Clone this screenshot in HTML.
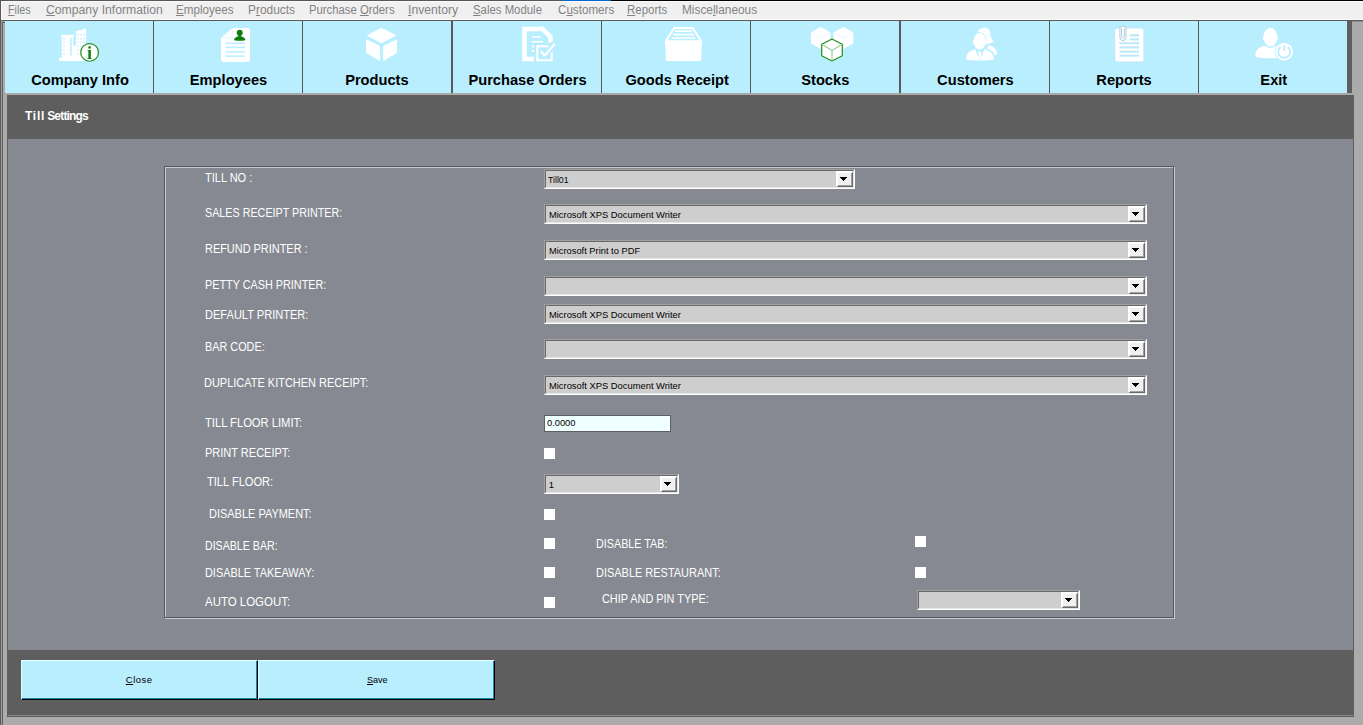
<!DOCTYPE html>
<html lang="en"><head><meta charset="utf-8"><title>Till Settings</title>
<style>
html,body{margin:0;padding:0;}
body{width:1363px;height:725px;overflow:hidden;position:relative;background:#ababab;font-family:"Liberation Sans",sans-serif;}
div,span{box-sizing:border-box;}
.a{position:absolute;}
.t{position:absolute;white-space:pre;line-height:1;}
.menu .t{font-size:12.5px;color:#838383;}
.menu u{text-decoration:underline;text-decoration-thickness:1px;text-underline-offset:1px;}
.tb{position:absolute;top:21px;height:72px;background:#b9eeff;}
.tl{font-size:14.667px;font-weight:bold;color:#000;}
.fl{font-size:12px;color:#fff;}
.ct{font-size:10px;color:#000;}
.combo{position:absolute;height:20px;background:#cecece;border-top:1px solid #a0a0a0;border-left:1px solid #a0a0a0;border-right:1px solid #fff;border-bottom:1px solid #fff;}
.combo:before{content:"";position:absolute;left:0;top:0;right:0;bottom:0;border-top:1px solid #696969;border-left:1px solid #696969;border-right:1px solid #e6e6e6;border-bottom:1px solid #e6e6e6;}
.cbtn{position:absolute;right:1px;top:1px;width:17px;height:16px;background:#f0f0f0;border-top:2px solid #fff;border-left:2px solid #fff;border-right:1px solid #696969;border-bottom:1px solid #696969;}
.cbtn:before{content:"";position:absolute;left:0;top:0;right:0;bottom:0;border-right:1px solid #a0a0a0;border-bottom:1px solid #a0a0a0;}
.cbtn svg{position:absolute;left:2px;top:4px;}
.chk{position:absolute;width:11px;height:11px;background:#fff;}
.btn{position:absolute;top:660px;height:40px;background:#b9eeff;border-top:1px solid #e4fdff;border-left:1px solid #e4fdff;border-right:1px solid #000;border-bottom:1px solid #000;}
.btn:before{content:"";position:absolute;left:0;top:0;right:0;bottom:0;border-right:1px solid #1f86ad;border-bottom:1px solid #1f86ad;}
.bt{font-size:10px;color:#000;}
.bt u{text-decoration:underline;text-decoration-thickness:1px;text-underline-offset:1px;}
</style></head>
<body>
<div class="a" style="left:0px;top:0px;width:563px;height:1px;background:#575757;"></div>
<div class="a" style="left:563px;top:0px;width:48px;height:1px;background:#0069d3;"></div>
<div class="a" style="left:611px;top:0px;width:752px;height:1px;background:#000;"></div>
<div class="menu">
<div class="a" style="left:0px;top:1px;width:1363px;height:19px;background:#f0f0f0;"></div>
<div class="a" style="left:0px;top:1px;width:1363px;height:1px;background:#fbfbfb;"></div>
<div class="a" style="left:1px;top:1px;width:1px;height:19px;background:#fbfbfb;"></div>
<div class="a" style="left:0px;top:19px;width:1363px;height:1px;background:#fbfbfb;"></div>
<div class="a" style="left:0px;top:1px;width:1px;height:19px;background:#585858;"></div>
<div class="a" style="left:0px;top:20px;width:1363px;height:1px;background:#5a5a5a;"></div>
<span id="m0" class="t " style="left:7.94px;top:4.25px;letter-spacing:0.000px;font-size:12.5px;transform:scaleX(0.8552);transform-origin:0 0;"><u>F</u>iles</span>
<span id="m1" class="t " style="left:45.50px;top:4.25px;letter-spacing:0.000px;font-size:12.5px;transform:scaleX(0.9770);transform-origin:0 0;"><u>C</u>ompany Information</span>
<span id="m2" class="t " style="left:176.27px;top:4.25px;letter-spacing:0.000px;font-size:12.5px;transform:scaleX(0.9309);transform-origin:0 0;"><u>E</u>mployees</span>
<span id="m3" class="t " style="left:247.55px;top:4.25px;letter-spacing:0.000px;font-size:12.5px;transform:scaleX(0.9526);transform-origin:0 0;">P<u>r</u>oducts</span>
<span id="m4" class="t " style="left:308.69px;top:4.25px;letter-spacing:0.000px;font-size:12.5px;transform:scaleX(0.9053);transform-origin:0 0;">Purchase <u>O</u>rders</span>
<span id="m5" class="t " style="left:408.12px;top:4.25px;letter-spacing:0.000px;font-size:12.5px;transform:scaleX(0.9753);transform-origin:0 0;"><u>I</u>nventory</span>
<span id="m6" class="t " style="left:473.30px;top:4.25px;letter-spacing:0.000px;font-size:12.5px;transform:scaleX(0.9105);transform-origin:0 0;"><u>S</u>ales Module</span>
<span id="m7" class="t " style="left:557.60px;top:4.25px;letter-spacing:0.000px;font-size:12.5px;transform:scaleX(0.9305);transform-origin:0 0;">C<u>u</u>stomers</span>
<span id="m8" class="t " style="left:627.38px;top:4.25px;letter-spacing:0.000px;font-size:12.5px;transform:scaleX(0.9173);transform-origin:0 0;"><u>R</u>eports</span>
<span id="m9" class="t " style="left:681.65px;top:4.25px;letter-spacing:0.000px;font-size:12.5px;transform:scaleX(0.9480);transform-origin:0 0;">Misce<u>l</u>laneous</span>
</div>
<div class="a" style="left:0px;top:21px;width:1px;height:704px;background:#5c5c5c;"></div>
<div class="a" style="left:1px;top:21px;width:1px;height:704px;background:#9c9c9c;"></div>
<div class="a" style="left:2px;top:22px;width:1px;height:703px;background:#606060;"></div>
<div class="a" style="left:2px;top:22px;width:3px;height:1px;background:#606060;"></div>
<div class="a" style="left:5px;top:21px;width:1342px;height:72px;background:#b9eeff"></div>
<div class="a" style="left:1347px;top:21px;width:5px;height:72px;background:#5e5e5e;"></div>
<div class="a" style="left:1352px;top:21px;width:11px;height:1px;background:#8c8c8c;"></div>
<div class="a" style="left:153px;top:21px;width:1px;height:72px;background:#595959;"></div>
<div class="a" style="left:302px;top:21px;width:1px;height:72px;background:#595959;"></div>
<div class="a" style="left:451px;top:21px;width:2px;height:72px;background:#595959;"></div>
<div class="a" style="left:601px;top:21px;width:1px;height:72px;background:#595959;"></div>
<div class="a" style="left:750px;top:21px;width:1px;height:72px;background:#595959;"></div>
<div class="a" style="left:899px;top:21px;width:2px;height:72px;background:#595959;"></div>
<div class="a" style="left:1049px;top:21px;width:1px;height:72px;background:#595959;"></div>
<div class="a" style="left:1198px;top:21px;width:1px;height:72px;background:#595959;"></div>
<div class="a" style="left:5px;top:93px;width:1349px;height:2px;background:#aaa9a9;"></div>
<span id="tl0" class="t tl" style="left:80.05px;top:73.39px;transform:translateX(-50%);">Company Info</span>
<span id="tl1" class="t tl" style="left:228.50px;top:73.39px;transform:translateX(-50%);">Employees</span>
<span id="tl2" class="t tl" style="left:376.90px;top:73.39px;transform:translateX(-50%);">Products</span>
<span id="tl3" class="t tl" style="left:527.50px;top:73.39px;transform:translateX(-50%);">Purchase Orders</span>
<span id="tl4" class="t tl" style="left:677.20px;top:73.39px;transform:translateX(-50%);">Goods Receipt</span>
<span id="tl5" class="t tl" style="left:825.30px;top:73.39px;transform:translateX(-50%);">Stocks</span>
<span id="tl6" class="t tl" style="left:975.40px;top:73.39px;transform:translateX(-50%);">Customers</span>
<span id="tl7" class="t tl" style="left:1124.00px;top:73.39px;transform:translateX(-50%);">Reports</span>
<span id="tl8" class="t tl" style="left:1273.80px;top:73.39px;transform:translateX(-50%);">Exit</span>
<svg class="a" style="left:0;top:21px;will-change:transform" width="1363" height="72" viewBox="0 21 1363 72">
<g><rect x="59" y="57.9" width="26.5" height="3.1" fill="#fff"/><rect x="61.1" y="34.8" width="12.9" height="1.7" fill="#fff"/><rect x="61.8" y="36" width="11.5" height="23" fill="#fff"/><rect x="73" y="45.6" width="3.5" height="13" fill="#fff"/><polygon points="75.9,31.3 86.1,28.2 86.1,59 75.9,59" fill="#fff"/><rect x="70.2" y="37.8" width="1.5" height="17.7" fill="#b9eeff"/><rect x="63.2" y="37.7" width="1.7" height="1.6" fill="#c9f2ff"/><rect x="63.2" y="41.7" width="1.7" height="1.6" fill="#c9f2ff"/><rect x="63.2" y="45.5" width="1.7" height="1.6" fill="#c9f2ff"/><rect x="63.2" y="49.5" width="1.7" height="1.6" fill="#c9f2ff"/><rect x="63.2" y="53.4" width="1.7" height="1.6" fill="#c9f2ff"/><rect x="76.85" y="34.0" width="1.7" height="1.6" fill="#c9f2ff"/><rect x="76.85" y="37.8" width="1.7" height="1.6" fill="#c9f2ff"/><rect x="76.85" y="41.6" width="1.7" height="1.6" fill="#c9f2ff"/><rect x="76.85" y="45.5" width="1.7" height="1.6" fill="#c9f2ff"/><rect x="76.85" y="49.5" width="1.7" height="1.6" fill="#c9f2ff"/><rect x="76.85" y="53.4" width="1.7" height="1.6" fill="#c9f2ff"/><rect x="80.05" y="34.0" width="1.7" height="1.6" fill="#c9f2ff"/><rect x="80.05" y="37.8" width="1.7" height="1.6" fill="#c9f2ff"/><rect x="80.05" y="41.6" width="1.7" height="1.6" fill="#c9f2ff"/><rect x="80.05" y="45.5" width="1.7" height="1.6" fill="#c9f2ff"/><rect x="80.05" y="49.5" width="1.7" height="1.6" fill="#c9f2ff"/><rect x="80.05" y="53.4" width="1.7" height="1.6" fill="#c9f2ff"/><rect x="83.25" y="34.0" width="1.7" height="1.6" fill="#c9f2ff"/><rect x="83.25" y="37.8" width="1.7" height="1.6" fill="#c9f2ff"/><rect x="83.25" y="41.6" width="1.7" height="1.6" fill="#c9f2ff"/><rect x="83.25" y="45.5" width="1.7" height="1.6" fill="#c9f2ff"/><rect x="83.25" y="49.5" width="1.7" height="1.6" fill="#c9f2ff"/><rect x="83.25" y="53.4" width="1.7" height="1.6" fill="#c9f2ff"/><circle cx="89.6" cy="52.4" r="8.85" fill="#fff" stroke="#1f8d1f" stroke-width="1.2"/><text x="89.6" y="58.9" text-anchor="middle" font-family="Liberation Serif, serif" font-weight="bold" font-size="18.5" fill="#168716">i</text></g>
<g><path d="M232.5 28H247.5Q250 28 250 30.5V59.5Q250 62 247.5 62H223.5Q221 62 221 59.5V37.7Z" fill="#fff"/><path d="M221.4 37.9H231Q232.4 37.9 232.4 36.5V28.4" fill="none" stroke="#dcf6ff" stroke-width="0.9"/><ellipse cx="239.7" cy="32.8" rx="2.95" ry="3.15" fill="#0d7d0d"/><path d="M234 39.7Q234.2 37.6 237 36.8L238.4 36.2V34.5H241V36.2L242.4 36.8Q245.2 37.6 245.4 39.7Q245.4 40.7 239.7 40.7Q234 40.7 234 39.7Z" fill="#0d7d0d"/><rect x="225.4" y="42.55" width="19.8" height="1.5" fill="#b9eeff"/><rect x="225.4" y="46.65" width="19.8" height="1.5" fill="#b9eeff"/><rect x="225.4" y="51.15" width="19.8" height="1.5" fill="#b9eeff"/><rect x="225.4" y="55.35" width="19.8" height="1.5" fill="#b9eeff"/></g>
<g fill="#fff" stroke="#fff" stroke-width="1" stroke-linejoin="round"><polygon points="381.5,28.35 395.6,35.5 381.5,42.65 367.4,35.5"/><polygon points="366.5,39.9 379.6,46.3 379.6,60.3 366.5,52.7"/><polygon points="383.7,46.3 396.5,39.9 396.5,52.7 383.7,60.3"/></g>
<g fill="none" stroke="#fff"><path d="M533.8 58.95H524.45V29.05H542.6L550.45 36.9V42.5" stroke-width="4.5" stroke-linejoin="miter"/><path d="M531.8 37H540.9M531.8 41.7H543.1" stroke-width="1.6"/><rect x="531.9" y="45.3" width="2" height="2" fill="#fff" stroke="none"/><rect x="531.9" y="50" width="2" height="2" fill="#fff" stroke="none"/><path d="M548.5 46.3H537.3V60.2H551.7V52.5" stroke-width="2"/><path d="M540.9 51.2L544.7 55.8L554.9 43.7" stroke="#b9eeff" stroke-width="4.2" stroke-linejoin="bevel"/><path d="M540.9 51.2L544.7 55.6L554.9 43.7" stroke-width="2.1" stroke-linejoin="bevel"/></g>
<g><polygon points="665,40.3 702,40.3 701,61 666,61" fill="#fff"/><path d="M666 40.8L674.3 28H692.7L701 40.8" fill="none" stroke="#fff" stroke-width="2.2" stroke-linejoin="miter"/><path d="M675 31.2H692M673.3 34.6H694M671.8 38H695.3" stroke="#fff" stroke-width="1.7"/></g>
<g><polygon points="820.7,27 830.45,32.5 830.45,43.4 820.7,48.9 810.95,43.4 810.95,32.5" fill="#fff"/><polygon points="843.4,27 853.25,32.5 853.25,43.4 843.4,48.9 833.55,43.4 833.55,32.5" fill="#fff"/><path d="M811 32.5L820.7 38 830.4 32.5M820.7 38V49" fill="none" stroke="#e6f9ff" stroke-width="0.8"/><path d="M833.6 32.5L843.4 38 853.2 32.5M843.4 38V49" fill="none" stroke="#e6f9ff" stroke-width="0.8"/><polygon points="832,39.0 842.3,44.3 842.3,55.699999999999996 832,61.0 821.7,55.699999999999996 821.7,44.3" fill="#fff" stroke="#1f8e1f" stroke-width="1.2" stroke-linejoin="round"/><path d="M821.9 44.4L832 50.4 842.1 44.4M832 50.4V60.8" fill="none" stroke="#8fca8f" stroke-width="1.1"/></g>
<g><path d="M977.9 31.5Q980 27.8 984.5 27.8Q990 27.8 990.3 34Q990.6 39 993.7 41.5Q991 43.8 987.2 43.9L986 46.3Q984 45 984 41Z" fill="#fff"/><path d="M988.6 45.6Q990.6 45.4 992.6 46.6Q997 49.2 997.2 54.3L994.2 55.2Q993.2 51.2 990 49.6Q988.3 48.8 986.8 48.6Z" fill="#fff"/><ellipse cx="979.7" cy="41.2" rx="6.1" ry="8.4" fill="#fff" stroke="#b9eeff" stroke-width="1.6"/><ellipse cx="979.7" cy="41.2" rx="6.05" ry="8.4" fill="#fff"/><ellipse cx="973.6" cy="42" rx="0.9" ry="1.8" fill="#fff"/><ellipse cx="985.8" cy="42" rx="0.9" ry="1.8" fill="#fff"/><path d="M965.8 59Q965.8 52.5 972 50.3L975.2 48.7 979.7 60 984.3 48.7 987.6 50.3Q994 52.5 994 59Q994 60.9 979.9 60.9Q965.8 60.9 965.8 59Z" fill="#fff" stroke="#b9eeff" stroke-width="0.6"/><path d="M978.5 51.6H980.9L981.4 53.2 980.6 54.4 981.2 57.8 979.7 59.4 978.2 57.8 978.8 54.4 978 53.2Z" fill="#fff"/></g>
<g><rect x="1115" y="28.2" width="28.7" height="33.5" rx="2.6" fill="#fff" stroke="#cfe3ea" stroke-width="0.5"/><rect x="1129.4" y="34.60" width="10" height="1.8" rx="0.9" fill="#b9eeff"/><path d="M1129.8 34.50H1139" stroke="#c9d6da" stroke-width="0.5"/><rect x="1129.4" y="38.70" width="10" height="1.8" rx="0.9" fill="#b9eeff"/><path d="M1129.8 38.60H1139" stroke="#c9d6da" stroke-width="0.5"/><rect x="1119.2" y="42.50" width="20.2" height="1.8" rx="0.9" fill="#b9eeff"/><path d="M1119.6 42.40H1139" stroke="#c9d6da" stroke-width="0.5"/><rect x="1119.2" y="46.70" width="20.2" height="1.8" rx="0.9" fill="#b9eeff"/><path d="M1119.6 46.60H1139" stroke="#c9d6da" stroke-width="0.5"/><rect x="1119.2" y="50.90" width="20.2" height="1.8" rx="0.9" fill="#b9eeff"/><path d="M1119.6 50.80H1139" stroke="#c9d6da" stroke-width="0.5"/><rect x="1119.2" y="55.00" width="20.2" height="1.8" rx="0.9" fill="#b9eeff"/><path d="M1119.6 54.90H1139" stroke="#c9d6da" stroke-width="0.5"/><path d="M1119.9 37.5V28.2Q1119.9 26.4 1121.7 26.4H1124.2Q1126 26.4 1126 28.2V37.5Q1126 40.5 1122.95 40.5Q1119.9 40.5 1119.9 37.5Z" fill="#fff" stroke="#a2c6d4" stroke-width="0.9"/><path d="M1121.6 28.5V36.6Q1121.6 38 1122.95 38Q1124.3 38 1124.3 36.6V28.5" fill="#fff" stroke="#a2c6d4" stroke-width="0.9"/></g>
<g><ellipse cx="1270.4" cy="37.2" rx="6.8" ry="9.4" fill="#fff"/><ellipse cx="1263.7" cy="38" rx="0.9" ry="2" fill="#fff"/><ellipse cx="1277.1" cy="38" rx="0.9" ry="2" fill="#fff"/><path d="M1255.2 55.5Q1255.5 48.5 1262.5 46.6L1265.2 45.6Q1270.4 49.5 1275.6 45.6L1278.3 46.6Q1280 47.2 1281 48V58.3H1266Q1255.2 58 1255.2 55.5Z" fill="#fff"/><path d="M1264.9 45.2Q1270.4 50 1275.9 45.2" fill="none" stroke="#b9eeff" stroke-width="0.7"/><circle cx="1284.2" cy="51.8" r="9.6" fill="#b9eeff"/><circle cx="1284.2" cy="51.8" r="8.8" fill="#fff"/><path d="M1280.6 47.0A6 6 0 1 0 1287.8 47.0" fill="none" stroke="#b9eeff" stroke-width="1.9"/><path d="M1284.2 45V50.8" stroke="#b9eeff" stroke-width="1.8"/></g>
</svg>
<div class="a" style="left:7px;top:95px;width:1347px;height:622px;background:#5e5e5e;"></div>
<div class="a" style="left:8px;top:139px;width:1345px;height:511px;background:#868991;"></div>
<div class="a" style="left:8px;top:715px;width:1345px;height:1px;background:#85888f;"></div>
<span id="title" class="t" style="left:24.90px;top:109.68px;font-size:12px;font-weight:bold;color:#fff;"><span style="letter-spacing:0.806px">Till</span><span style="letter-spacing:-1.400px"> </span><span style="letter-spacing:-0.823px">Settings</span></span>
<div class="a" style="left:165px;top:167px;width:1010px;height:452px;border:1px solid #c8c9cd;"></div>
<div class="a" style="left:164px;top:166px;width:1010px;height:452px;border:1px solid #55585f;"></div>
<span id="f0" class="t fl" style="left:205.40px;top:171.68px;letter-spacing:0.000px;font-size:12px;transform:scaleX(0.9172);transform-origin:0 0;">TILL NO :</span>
<span id="f1" class="t fl" style="left:205.30px;top:206.68px;letter-spacing:0.000px;font-size:12px;transform:scaleX(0.8965);transform-origin:0 0;">SALES RECEIPT PRINTER:</span>
<span id="f2" class="t fl" style="left:205.40px;top:242.68px;letter-spacing:0.000px;font-size:12px;transform:scaleX(0.9107);transform-origin:0 0;">REFUND PRINTER :</span>
<span id="f3" class="t fl" style="left:205.40px;top:278.68px;letter-spacing:0.000px;font-size:12px;transform:scaleX(0.9021);transform-origin:0 0;">PETTY CASH PRINTER:</span>
<span id="f4" class="t fl" style="left:205.40px;top:308.68px;letter-spacing:0.000px;font-size:12px;transform:scaleX(0.9213);transform-origin:0 0;">DEFAULT PRINTER:</span>
<span id="f5" class="t fl" style="left:205.40px;top:340.68px;letter-spacing:0.000px;font-size:12px;transform:scaleX(0.9044);transform-origin:0 0;">BAR CODE:</span>
<span id="f6" class="t fl" style="left:204.40px;top:376.68px;letter-spacing:0.000px;font-size:12px;transform:scaleX(0.9143);transform-origin:0 0;">DUPLICATE KITCHEN RECEIPT:</span>
<span id="f7" class="t fl" style="left:205.40px;top:416.68px;letter-spacing:0.000px;font-size:12px;transform:scaleX(0.9324);transform-origin:0 0;">TILL FLOOR LIMIT:</span>
<span id="f8" class="t fl" style="left:205.40px;top:446.68px;letter-spacing:0.000px;font-size:12px;transform:scaleX(0.9171);transform-origin:0 0;">PRINT RECEIPT:</span>
<span id="f9" class="t fl" style="left:207.40px;top:475.68px;letter-spacing:0.000px;font-size:12px;transform:scaleX(0.9249);transform-origin:0 0;">TILL FLOOR:</span>
<span id="f10" class="t fl" style="left:209.40px;top:507.68px;letter-spacing:0.000px;font-size:12px;transform:scaleX(0.9140);transform-origin:0 0;">DISABLE PAYMENT:</span>
<span id="f11" class="t fl" style="left:205.40px;top:539.68px;letter-spacing:0.000px;font-size:12px;transform:scaleX(0.8850);transform-origin:0 0;">DISABLE BAR:</span>
<span id="f12" class="t fl" style="left:205.40px;top:566.68px;letter-spacing:0.000px;font-size:12px;transform:scaleX(0.9080);transform-origin:0 0;">DISABLE TAKEAWAY:</span>
<span id="f13" class="t fl" style="left:204.90px;top:595.68px;letter-spacing:0.000px;font-size:12px;transform:scaleX(0.9550);transform-origin:0 0;">AUTO LOGOUT:</span>
<span id="f14" class="t fl" style="left:596.40px;top:537.68px;letter-spacing:0.000px;font-size:12px;transform:scaleX(0.8972);transform-origin:0 0;">DISABLE TAB:</span>
<span id="f15" class="t fl" style="left:596.40px;top:566.68px;letter-spacing:0.000px;font-size:12px;transform:scaleX(0.9137);transform-origin:0 0;">DISABLE RESTAURANT:</span>
<span id="f16" class="t fl" style="left:602.30px;top:592.68px;letter-spacing:0.000px;font-size:12px;transform:scaleX(0.9083);transform-origin:0 0;">CHIP AND PIN TYPE:</span>
<div class="combo" style="left:544px;top:169px;width:311px;"><div class="cbtn"><svg width="7" height="4" viewBox="0 0 7 4"><path d="M0 0h7v1h-1v1h-1v1h-1v1h-1v-1h-1v-1h-1v-1h-1z" fill="#000"/></svg></div></div>
<span id="c0" class="t ct" style="left:548.00px;top:175.13px;letter-spacing:0.000px;font-size:9.5px;transform:scaleX(0.9200);transform-origin:0 0;">Till01</span>
<div class="combo" style="left:544px;top:204px;width:603px;"><div class="cbtn"><svg width="7" height="4" viewBox="0 0 7 4"><path d="M0 0h7v1h-1v1h-1v1h-1v1h-1v-1h-1v-1h-1v-1h-1z" fill="#000"/></svg></div></div>
<span id="c1" class="t ct" style="left:548.50px;top:210.13px;letter-spacing:0.000px;font-size:9.5px;transform:scaleX(0.9847);transform-origin:0 0;">Microsoft XPS Document Writer</span>
<div class="combo" style="left:544px;top:240px;width:603px;"><div class="cbtn"><svg width="7" height="4" viewBox="0 0 7 4"><path d="M0 0h7v1h-1v1h-1v1h-1v1h-1v-1h-1v-1h-1v-1h-1z" fill="#000"/></svg></div></div>
<span id="c2" class="t ct" style="left:548.50px;top:246.13px;letter-spacing:0.000px;font-size:9.5px;transform:scaleX(0.9806);transform-origin:0 0;">Microsoft Print to PDF</span>
<div class="combo" style="left:544px;top:276px;width:603px;"><div class="cbtn"><svg width="7" height="4" viewBox="0 0 7 4"><path d="M0 0h7v1h-1v1h-1v1h-1v1h-1v-1h-1v-1h-1v-1h-1z" fill="#000"/></svg></div></div>
<div class="combo" style="left:544px;top:304px;width:603px;"><div class="cbtn"><svg width="7" height="4" viewBox="0 0 7 4"><path d="M0 0h7v1h-1v1h-1v1h-1v1h-1v-1h-1v-1h-1v-1h-1z" fill="#000"/></svg></div></div>
<span id="c4" class="t ct" style="left:548.50px;top:310.13px;letter-spacing:0.000px;font-size:9.5px;transform:scaleX(0.9847);transform-origin:0 0;">Microsoft XPS Document Writer</span>
<div class="combo" style="left:544px;top:339px;width:603px;"><div class="cbtn"><svg width="7" height="4" viewBox="0 0 7 4"><path d="M0 0h7v1h-1v1h-1v1h-1v1h-1v-1h-1v-1h-1v-1h-1z" fill="#000"/></svg></div></div>
<div class="combo" style="left:544px;top:375px;width:603px;"><div class="cbtn"><svg width="7" height="4" viewBox="0 0 7 4"><path d="M0 0h7v1h-1v1h-1v1h-1v1h-1v-1h-1v-1h-1v-1h-1z" fill="#000"/></svg></div></div>
<span id="c6" class="t ct" style="left:548.50px;top:381.13px;letter-spacing:0.000px;font-size:9.5px;transform:scaleX(0.9847);transform-origin:0 0;">Microsoft XPS Document Writer</span>
<div class="a" style="left:544px;top:415px;width:127px;height:17px;background:#f0ffff;border:1px solid #5f5f5f;"></div>
<span id="c7" class="t ct" style="left:546.80px;top:418.13px;letter-spacing:0.000px;font-size:9.5px;transform:scaleX(0.9801);transform-origin:0 0;">0.0000</span>
<div class="combo" style="left:544px;top:474px;width:135px;"><div class="cbtn"><svg width="7" height="4" viewBox="0 0 7 4"><path d="M0 0h7v1h-1v1h-1v1h-1v1h-1v-1h-1v-1h-1v-1h-1z" fill="#000"/></svg></div></div>
<span id="c8" class="t ct" style="left:548.80px;top:480.13px;letter-spacing:0.000px;font-size:9.5px;">1</span>
<div class="combo" style="left:917px;top:590px;width:163px;"><div class="cbtn"><svg width="7" height="4" viewBox="0 0 7 4"><path d="M0 0h7v1h-1v1h-1v1h-1v1h-1v-1h-1v-1h-1v-1h-1z" fill="#000"/></svg></div></div>
<div class="chk" style="left:544px;top:448px"></div>
<div class="chk" style="left:544px;top:509px"></div>
<div class="chk" style="left:544px;top:538px"></div>
<div class="chk" style="left:544px;top:567px"></div>
<div class="chk" style="left:544px;top:597px"></div>
<div class="chk" style="left:915px;top:536px"></div>
<div class="chk" style="left:915px;top:567px"></div>
<div class="btn" style="left:21px;width:237px;"></div>
<div class="btn" style="left:258px;width:237px;"></div>
<span id="b0" class="t bt" style="left:125.80px;top:675.23px;letter-spacing:0.499px;font-size:9.5px;"><u>C</u>lose</span>
<span id="b1" class="t bt" style="left:366.80px;top:675.23px;letter-spacing:0.000px;font-size:9.5px;transform:scaleX(0.9499);transform-origin:0 0;"><u>S</u>ave</span>
</body></html>
